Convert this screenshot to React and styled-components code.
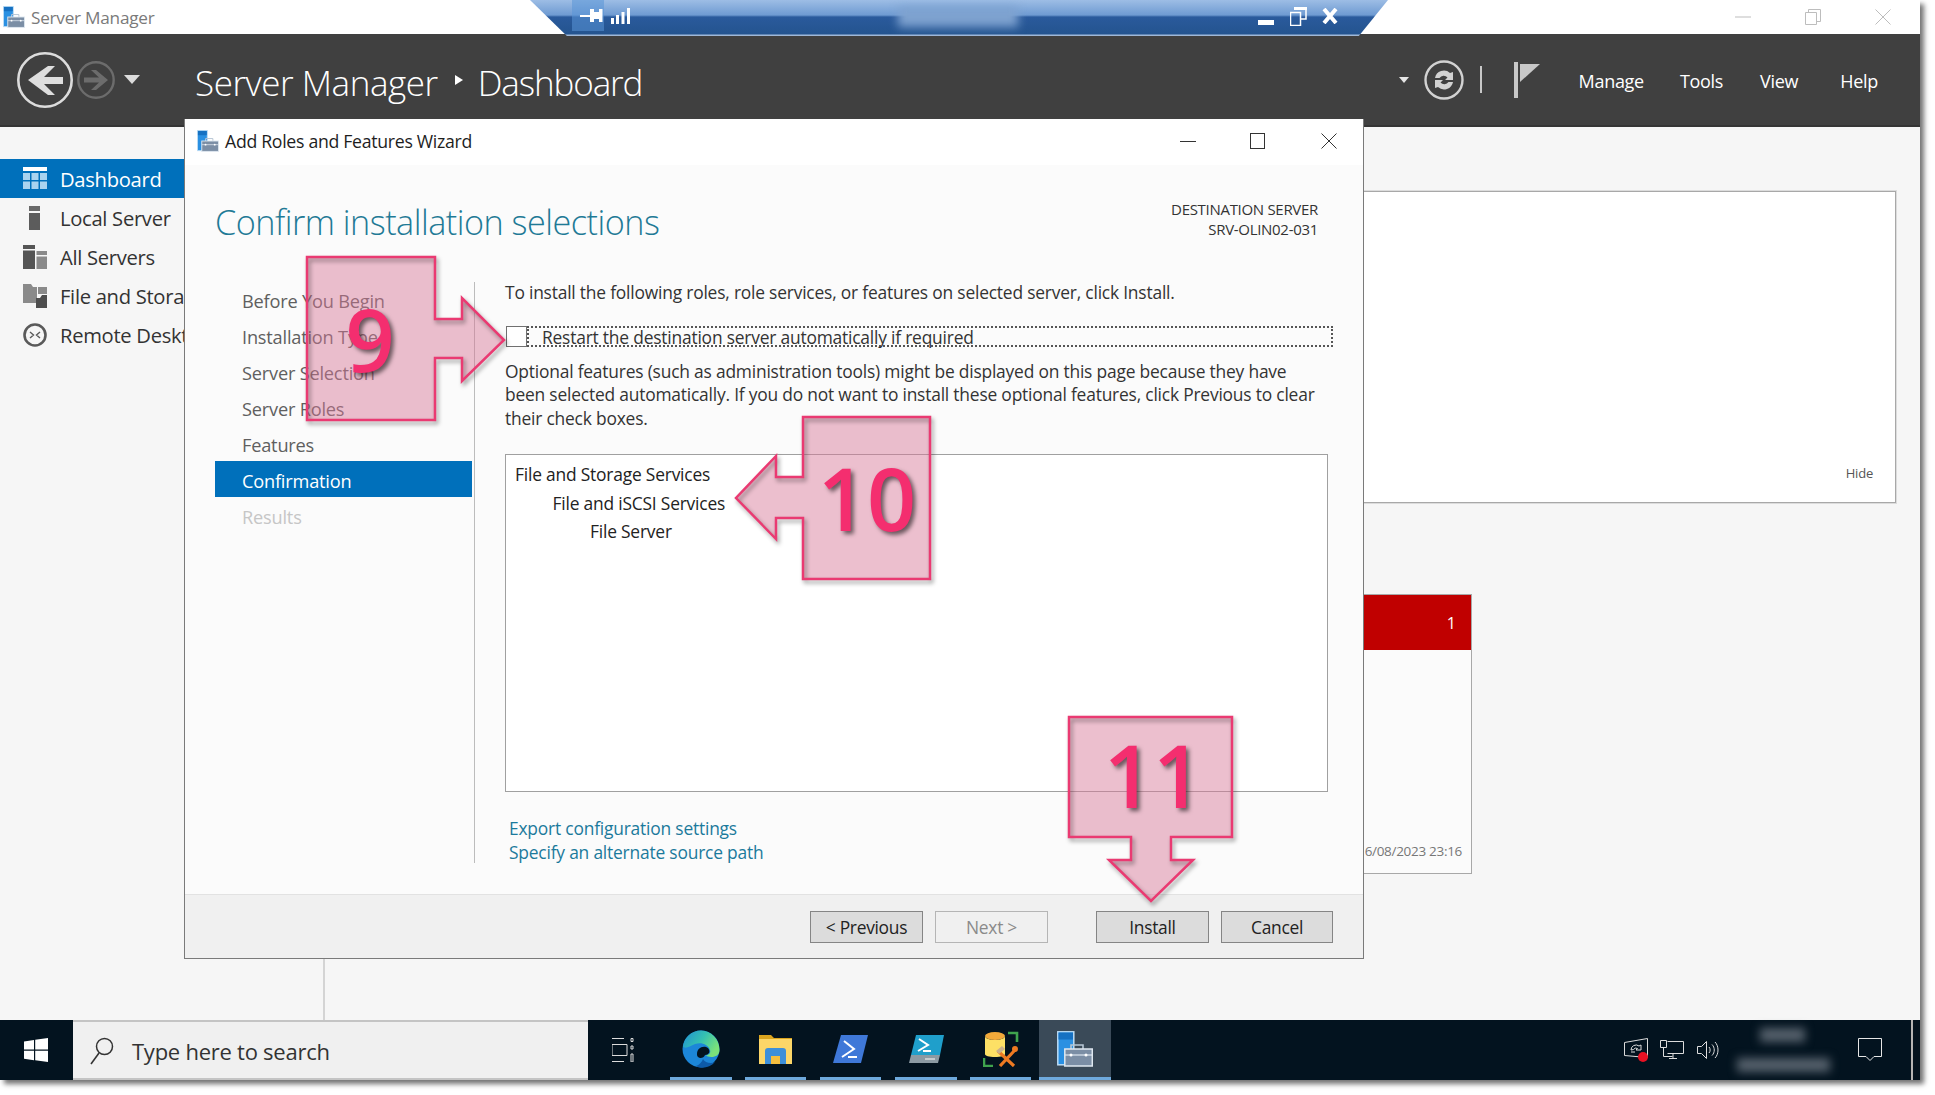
import React from 'react';
import styled, { createGlobalStyle } from 'styled-components';

const FONT = '"Open Sans", "Noto Sans", sans-serif';

const Global = createGlobalStyle`
  html, body { margin: 0; padding: 0; background: #fff; }
  body { font-family: ${FONT}; }
  * { box-sizing: border-box; }
  svg { flex: none; }
`;

const Shell = styled.div`
  width: 1935px;
  height: 1095px;
  position: relative;
  overflow: hidden;
  background: #fff;
`;

const Screen = styled.div`
  width: 1920px;
  height: 1080px;
  display: flex;
  flex-direction: column;
  background: #f6f6f6;
  box-shadow: 4px 4px 5px rgba(0, 0, 0, .55);
`;

/* window chrome */
const TitleBar = styled.div`
  height: 34px;
  flex: none;
  background: #fff;
  display: flex;
  align-items: center;
  padding: 0 29px 0 3px;
  gap: 6px;
`;
const AppName = styled.span`
  font-size: 17.2px;
  letter-spacing: -.25px;
  color: #7a7a7a;
  flex: 1;
`;
const Chrome = styled.div`
  display: flex;
  align-items: center;
  gap: 54px;
`;

const Header = styled.div`
  height: 93px;
  flex: none;
  background: #404040;
  border-bottom: 2px solid #353535;
  display: flex;
  align-items: center;
  padding: 0 42px 0 17px;
`;
const NavButtons = styled.div`
  display: flex;
  align-items: center;
  gap: 4px;
  margin-right: 55px;
`;
const NavCaret = styled.svg`
  margin-left: 5px;
`;
const Crumb = styled.span`
  font-size: 35px;
  font-weight: 300;
  letter-spacing: ${p => p.$tight ? '-1.1px' : '-.45px'};
  color: #fff;
  line-height: 1;
  margin-top: 5px;
`;
const CrumbSep = styled.svg`
  width: 8px;
  height: 10px;
  margin: 0 15px 0 17px;
  fill: #fff;
`;
const HeaderRight = styled.div`
  margin-left: auto;
  display: flex;
  align-items: center;
`;
const HeadCaret = styled.svg`
  margin-right: 15px;
`;
const MenuItem = styled.span`
  font-size: 18px;
  letter-spacing: -.3px;
  color: #fff;
  margin: 2px 0 0 ${p => p.$gap}px;
`;
const HeadDivider = styled.div`
  width: 2px;
  height: 27px;
  background: #c8c8c8;
  margin: 0 32px 0 16px;
`;

const Body = styled.div`
  flex: 1;
  display: flex;
  min-height: 0;
`;
const Sidebar = styled.nav`
  width: 185px;
  flex: none;
  padding-top: 32px;
  overflow: hidden;
`;
const SideRow = styled.div`
  height: 39px;
  display: flex;
  align-items: center;
  gap: 13px;
  padding-left: 23px;
  white-space: nowrap;
  font-size: 20.2px;
  letter-spacing: -.3px;
  color: ${p => (p.$active ? '#fff' : '#333')};
  background: ${p => (p.$active ? '#0070bb' : 'transparent')};
`;

/* what lies behind the dialog */
const Main = styled.div`
  flex: 1;
  display: flex;
  flex-direction: column;
  padding: 64px 24px 0 0;
`;
const ThumbPanel = styled.div`
  height: 312px;
  flex: none;
  background: #fff;
  border: 1px solid #a8a8a8;
  box-shadow: 0 0 0 1px #dcdcdc;
  display: flex;
  align-items: flex-end;
  justify-content: flex-end;
  padding: 0 22px 20px 0;
  font-size: 13px;
  letter-spacing: -.2px;
  color: #555;
`;
const Tile = styled.div`
  width: 1172px;
  height: 280px;
  flex: none;
  margin: 91px 0 0 115px;
  background: #fbfbfb;
  border: 1px solid #a8a8a8;
  display: flex;
  flex-direction: column;
`;
const TileHead = styled.div`
  height: 55px;
  flex: none;
  background: #c00000;
  color: #fff;
  display: flex;
  align-items: center;
  justify-content: flex-end;
  padding-right: 15px;
  font-size: 16px;
`;
const TileFoot = styled.div`
  margin-top: auto;
  padding: 0 9px 13px 0;
  text-align: right;
  color: #777;
  font-size: 13.5px;
  letter-spacing: -.3px;
`;
const Connector = styled.div`
  flex: 1;
  width: 2px;
  margin-left: 138px;
  background: #d4d4d4;
`;

/* dialog */
const Dialog = styled.div`
  position: absolute;
  left: 184px;
  top: 119px;
  width: 1180px;
  height: 840px;
  background: #fbfbfb;
  border: 1px solid #7a7a7a;
  border-top: 0;
  display: flex;
  flex-direction: column;
`;
const DialogTitle = styled.div`
  height: 46px;
  flex: none;
  background: #fff;
  display: flex;
  align-items: center;
  padding: 0 26px 3px 12px;
  gap: 6px;
`;
const DialogName = styled.span`
  font-size: 17.7px;
  letter-spacing: -.3px;
  color: #1e1e1e;
  flex: 1;
`;
const DialogControls = styled.div`
  display: flex;
  align-items: center;
  gap: 56px;
`;
const MinGlyph = styled.svg`
  margin-right: -2px;
`;
const HeadingRow = styled.div`
  height: 74px;
  flex: none;
  display: flex;
  justify-content: space-between;
  align-items: center;
  padding: 34px 45px 0 30px;
`;
const Heading = styled.h1`
  margin: 0;
  padding-top: 6px;
  font-size: 34.2px;
  font-weight: 300;
  letter-spacing: -.5px;
  line-height: 40px;
  color: #1f7a96;
`;
const Destination = styled.div`
  text-align: right;
  font-size: 15px;
  line-height: 20px;
  letter-spacing: -.3px;
  color: #333;
`;
const Columns = styled.div`
  flex: 1;
  display: flex;
  margin-top: 42px;
  padding-left: 30px;
  min-height: 0;
`;
const StepList = styled.div`
  width: 257px;
  flex: none;
`;
const Step = styled.div`
  height: 36px;
  display: flex;
  align-items: center;
  padding: 3px 0 0 27px;
  font-size: 18.2px;
  letter-spacing: -.2px;
  color: ${p => (p.$active ? '#fff' : p.$off ? '#c6c6c6' : '#5f5f5f')};
  background: ${p => (p.$active ? '#0070bb' : 'transparent')};
`;
const Divider = styled.div`
  width: 1px;
  height: 581px;
  margin: 1px 30px 0 2px;
  background: #bcbcbc;
  flex: none;
`;
const Content = styled.div`
  flex: 1;
  padding-right: 30px;
  font-size: 17.4px;
  letter-spacing: -.2px;
  line-height: 23.5px;
  color: #333;
`;
const Para = styled.p`
  margin: ${p => p.$top}px 0 0;
`;
const CheckRow = styled.div`
  display: flex;
  height: 21px;
  margin: 21px 0 0 1px;
  align-items: stretch;
`;
const CheckBox = styled.span`
  width: 21px;
  flex: none;
  background: #fff;
  border: 1px solid #707070;
`;
const CheckLabel = styled.span`
  flex: 1;
  border: 2px dotted #555;
  padding-left: 13px;
  line-height: 18px;
`;
const ResultBox = styled.div`
  width: 823px;
  height: 338px;
  margin: 24px 0 0;
  padding: 5px 9px;
  background: #fff;
  border: 1px solid #a0a0a0;
`;
const ResultLine = styled.div`
  height: 28.5px;
  line-height: 28.5px;
  padding-left: ${p => p.$depth * 37.5}px;
  color: #222;
`;
const Links = styled.div`
  margin: 24px 0 0 4px;
  line-height: 24px;
  color: #1b7a9c;
`;
const Footer = styled.div`
  height: 64px;
  flex: none;
  background: #f0f0f0;
  border-top: 1px solid #e2e2e2;
  display: flex;
  align-items: center;
  justify-content: flex-end;
  padding: 1px 30px 0 0;
  gap: 12px;
`;
const Button = styled.div`
  width: ${p => p.$w || 113}px;
  height: 32px;
  display: flex;
  align-items: center;
  justify-content: center;
  font-size: 17.4px;
  letter-spacing: -.3px;
  margin-left: ${p => p.$gap || 0}px;
  color: ${p => (p.$off ? '#8a8a8a' : '#222')};
  background: ${p => (p.$off ? '#f0f0f0' : '#dcdcdc')};
  border: 1px solid ${p => (p.$off ? '#b5b5b5' : '#858585')};
`;

/* pink annotations */
const Callout = styled.div`
  position: absolute;
  left: ${p => p.$x}px;
  top: ${p => p.$y}px;
  width: ${p => p.$w}px;
  height: ${p => p.$h}px;
`;
const CalloutShape = styled.svg`
  width: 100%;
  height: 100%;
  display: block;
  overflow: visible;
`;
const CalloutFill = styled.polygon`
  fill: rgba(214, 120, 150, .47);
`;
const CalloutEdge = styled.polygon`
  fill: none;
  stroke: #ea3a72;
  stroke-width: 2.5;
  filter: drop-shadow(2px 3px 2px rgba(0, 0, 0, .4));
`;
const CalloutNumber = styled.span`
  position: absolute;
  left: ${p => p.$cx}px;
  top: ${p => p.$cy}px;
  transform: translate(-50%, -50%);
  font-size: 86px;
  font-weight: 600;
  line-height: 1;
  color: #f42e6f;
  text-shadow: 3px 3px 4px rgba(0, 0, 0, .55);
`;

/* remote desktop bar */
const RdpBar = styled.div`
  position: absolute;
  left: 530px;
  top: 0;
  width: 858px;
  height: 36px;
  clip-path: polygon(0 0, 100% 0, 96.6% 100%, 4.3% 100%);
  background: linear-gradient(#9dbde5 0, #6f9bd2 15px, #2a5a9c 17px, #24548f 34px, #9fb8d8 35px);
`;
const RdpPin = styled.div`
  position: absolute;
  left: 42px;
  top: 0;
  width: 32px;
  height: 31px;
  background: rgba(90, 150, 215, .55);
`;
const RdpIcon = styled.svg`
  position: absolute;
  left: ${p => p.$x}px;
  top: ${p => p.$y}px;
`;
const Smudge = styled.div`
  position: absolute;
  left: ${p => p.$x}px;
  top: ${p => p.$y}px;
  width: ${p => p.$w}px;
  height: ${p => p.$h}px;
  background: ${p => p.$c};
  filter: blur(5px);
`;

/* taskbar */
const Taskbar = styled.div`
  height: 60px;
  flex: none;
  background: #03131f;
  display: flex;
  align-items: stretch;
  position: relative;
`;
const StartSlot = styled.div`
  width: 73px;
  display: flex;
  align-items: center;
  padding-left: 24px;
  flex: none;
`;
const SearchBox = styled.div`
  width: 515px;
  flex: none;
  display: flex;
  align-items: center;
  gap: 18px;
  padding: 2px 0 0 17px;
  background: #f0f0f0;
  border-top: 2px solid #c4c4c4;
  border-bottom: 2px solid #c4c4c4;
  font-size: 22px;
  letter-spacing: -.25px;
  color: #333;
`;
const TaskView = styled.div`
  width: 82px;
  flex: none;
  display: flex;
  align-items: center;
  justify-content: center;
  padding-right: 10px;
`;
const TaskItem = styled.div`
  width: ${p => p.$w}px;
  margin-right: ${p => p.$mr}px;
  flex: none;
  display: flex;
  align-items: center;
  justify-content: center;
  border-bottom: 3px solid #6ea9dc;
  background: ${p => (p.$active ? '#3a4a58' : 'transparent')};
`;
const Tray = styled.div`
  margin-left: auto;
  display: flex;
  align-items: center;
  width: 296px;
  padding-left: 7px;
  border-right: 2px solid #b5b5b5;
  margin-right: 7px;
  position: relative;
`;
const TrayIcon = styled.svg`
  margin: 0 ${p => p.$mr || 0}px 0 ${p => p.$ml || 0}px;
`;

const ServerIcon = ({ size = 24 }) => (
  <svg width={size} height={size} viewBox="0 0 36 36">
    <rect x=".8" y=".8" width="16" height="33" fill="#2a90e2" stroke="#bcdcf5" strokeWidth="1.5" />
    <rect x="1.500" y="1.500" width="14.500" height="7" fill="#1671c2" />
    <path d="M14 18v-4h12v4" fill="none" stroke="#b7c6d4" strokeWidth="1.600" />
    <rect x="7.800" y="18" width="27.500" height="17" fill="#7b8ea5" stroke="#dfe8f0" strokeWidth="1.500" />
    <path d="M8 24h27" stroke="#dfe8f0" strokeWidth="1.200" />
    <circle cx="14" cy="24" r="1.500" fill="#fff" />
    <circle cx="29" cy="24" r="1.500" fill="#fff" />
  </svg>
);

const CloseGlyph = ({ color, size = 16 }) => (
  <svg width={size} height={size} viewBox="0 0 16 16">
    <path d="M.5.5l15 15M15.500.5l-15 15" stroke={color} fill="none" />
  </svg>
);

const DashIcon = () => (
  <svg width="24" height="24" viewBox="0 0 24 24">
    <rect y="0" width="24" height="4" fill="#fff" />
    <path fill="#a9d3ef" d="M0 6h7v7H0zM8.500 6h7v7h-7zM17 6h7v7h-7zM0 14.500h7V22H0zM8.500 14.500h7V22h-7zM17 14.500h7V22h-7z" />
  </svg>
);
const LocalIcon = () => (
  <svg width="24" height="24" viewBox="0 0 24 24">
    <rect x="6" y="0" width="11" height="5" fill="#6a6a6a" />
    <rect x="6" y="7" width="11" height="17" fill="#5c5c5c" />
  </svg>
);
const AllIcon = () => (
  <svg width="24" height="24" viewBox="0 0 24 24">
    <rect y="0" width="12" height="4" fill="#555" />
    <rect y="5.500" width="12" height="18.500" fill="#555" />
    <rect x="13.500" y="6" width="10.500" height="4" fill="#8a8a8a" />
    <rect x="13.500" y="11.500" width="10.500" height="12.500" fill="#8a8a8a" />
  </svg>
);
const StorageIcon = () => (
  <svg width="24" height="24" viewBox="0 0 24 24">
    <path fill="#8a8a8a" d="M0 0h8l2 3h4v16H0z" />
    <path fill="#8a8a8a" d="M15 3h9v7h-9z" />
    <path fill="#4e4e4e" d="M13 14h4l2-3h5v13H13z" />
  </svg>
);
const RemoteIcon = () => (
  <svg width="24" height="24" viewBox="0 0 24 24">
    <circle cx="12" cy="12" r="10.500" fill="none" stroke="#5a5a5a" strokeWidth="2.600" />
    <path d="M7 9l3.500 3L7 15M17 9l-3.500 3 3.500 3" fill="none" stroke="#5a5a5a" strokeWidth="1.400" />
  </svg>
);

const App = () => (
  <Shell>
    <Global />
    <Screen>
      <TitleBar>
        <ServerIcon size={22} />
        <AppName>Server Manager</AppName>
        <Chrome>
          <svg width="16" height="16" viewBox="0 0 16 16"><path d="M0 8h16" stroke="#bdbdbd" /></svg>
          <svg width="16" height="16" viewBox="0 0 16 16"><path d="M.5 3.500h11v12H.5zM3.500 3.500v-3h12v12h-4" fill="none" stroke="#bdbdbd" /></svg>
          <CloseGlyph color="#bdbdbd" />
        </Chrome>
      </TitleBar>
      <Header>
        <NavButtons>
          <svg width="56" height="56" viewBox="0 0 56 56">
            <circle cx="28" cy="28" r="26.700" fill="none" stroke="#dcdcdc" strokeWidth="2.600" />
            <path d="M11 28l20-14h7L27 25h19v7H27l11 11h-7z" fill="#dedede" />
          </svg>
          <svg width="38" height="38" viewBox="0 0 38 38">
            <circle cx="19" cy="19" r="17.700" fill="none" stroke="#6c6c6c" strokeWidth="2.400" />
            <path d="M31 19L19 9h-5l8 7.500H7v5h15L14 29h5z" fill="#6c6c6c" />
          </svg>
          <NavCaret width="16" height="9" viewBox="0 0 16 9">
            <path d="M0 0h16L8 9z" fill="#dcdcdc" />
          </NavCaret>
        </NavButtons>
        <Crumb>Server Manager</Crumb>
        <CrumbSep viewBox="0 0 8 10"><path d="M0 0l8 5-8 5z" /></CrumbSep>
        <Crumb $tight>Dashboard</Crumb>
        <HeaderRight>
          <HeadCaret width="10" height="6" viewBox="0 0 10 6">
            <path d="M0 0h10L5 6z" fill="#e6e6e6" />
          </HeadCaret>
          <svg width="40" height="40" viewBox="0 0 40 40">
            <circle cx="20" cy="20" r="18.500" fill="none" stroke="#d2d2d2" strokeWidth="2.400" />
            <path d="M11 18a9 9 0 0 1 15-5l3-1v8h-8l2.500-2.500a5 5 0 0 0-8 .5zM29 22a9 9 0 0 1-15 5l-3 1v-8h8l-2.500 2.500a5 5 0 0 0 8-.5z" fill="#d2d2d2" />
          </svg>
          <HeadDivider />
          <svg width="26" height="36" viewBox="0 0 26 36">
            <rect x="0" y="0" width="4" height="36" fill="#c8c8c8" />
            <path d="M6 2h20L6 20z" fill="#c8c8c8" />
          </svg>
          <MenuItem $gap={39}>Manage</MenuItem>
          <MenuItem $gap={36}>Tools</MenuItem>
          <MenuItem $gap={37}>View</MenuItem>
          <MenuItem $gap={42}>Help</MenuItem>
        </HeaderRight>
      </Header>
      <Body>
        <Sidebar>
          <SideRow $active><DashIcon />Dashboard</SideRow>
          <SideRow><LocalIcon />Local Server</SideRow>
          <SideRow><AllIcon />All Servers</SideRow>
          <SideRow><StorageIcon />File and Storage Services</SideRow>
          <SideRow><RemoteIcon />Remote Desktop Services</SideRow>
        </Sidebar>
        <Main>
          <ThumbPanel>Hide</ThumbPanel>
          <Tile>
            <TileHead>1</TileHead>
            <TileFoot>6/08/2023 23:16</TileFoot>
          </Tile>
          <Connector />
        </Main>
      </Body>
      <Taskbar>
        <StartSlot>
          <svg width="24" height="24" viewBox="0 0 24 24">
            <path fill="#fff" d="M0 3.500l10-1.500v9.500H0zM11.200 1.800L24 0v11.500H11.200zM0 12.700h10v9.500L0 20.700zM11.200 12.700H24V24l-12.800-1.800z" />
          </svg>
        </StartSlot>
        <SearchBox>
          <svg width="24" height="28" viewBox="0 0 24 28">
            <circle cx="14.500" cy="9.500" r="8" fill="none" stroke="#333" strokeWidth="1.500" />
            <path d="M9 16L1 27" stroke="#333" strokeWidth="1.600" />
          </svg>
          Type here to search
        </SearchBox>
        <TaskView>
          <svg width="24" height="24" viewBox="0 0 24 24">
            <path d="M0 .5h12M0 23.500h12M0 6.500h15v11H0zM19 .5h2v3h-2zM19 8h2v3h-2zM19 16h2v8h-2z" fill="none" stroke="#dcdcdc" />
          </svg>
        </TaskView>
        <TaskItem $w={62} $mr={13}>
          <svg width="38" height="38" viewBox="0 0 38 38">
            <defs>
              <linearGradient id="edgeTop" x1="0" y1="0" x2="1" y2=".5">
                <stop offset="0" stopColor="#1f8fd4" />
                <stop offset=".55" stopColor="#35c1b1" />
                <stop offset="1" stopColor="#7be27a" />
              </linearGradient>
            </defs>
            <circle cx="19" cy="19" r="18.500" fill="#1c86d8" />
            <path d="M14 36c5 3 14 2 19-4-4 2-10 1-12-3-1 3-4 6-7 7z" fill="#0d5aa8" />
            <path d="M1 17C2 7 10 .5 19 .5 29 .5 37.500 9 37.500 20c0 5-4 7-8 7-3 0-5-1-5.500-2 3 0 5-2 4-5-2-6-9-8-15-6-5 2-9 5-11.500 3z" fill="url(#edgeTop)" />
            <path d="M15 24c0-5 4-8 9-7 3 1 4 4 3 6-1 1-2 2-4 2-1 3-5 4-7 2-1-1-1-2-1-3z" fill="#03131f" />
          </svg>
        </TaskItem>
        <TaskItem $w={61} $mr={14}>
          <svg width="33" height="30" viewBox="0 0 33 30">
            <path d="M0 1h12l3 3h18v5H0z" fill="#dba51f" />
            <rect y="5" width="33" height="25" fill="#fcd668" />
            <path d="M6 30V17a3 3 0 0 1 3-3h15a3 3 0 0 1 3 3v13h-6v-8H12v8z" fill="#3d8fd9" />
            <rect x="12" y="22" width="9" height="8" fill="#f5bf3f" />
          </svg>
        </TaskItem>
        <TaskItem $w={61} $mr={14}>
          <svg width="35" height="28" viewBox="0 0 35 28">
            <path d="M8 0h27l-7 28H0z" fill="#3f78d8" />
            <path d="M11 6l10 8-12 8M15 22h9" fill="none" stroke="#fff" strokeWidth="2" />
          </svg>
        </TaskItem>
        <TaskItem $w={62} $mr={13}>
          <svg width="35" height="28" viewBox="0 0 35 28">
            <path d="M7 0h28l-4 20H2z" fill="#1f9fcb" />
            <path d="M2 20h29l-2 8H0z" fill="#8c9aa3" />
            <path d="M10 4l9 6-10 6M14 16h8" fill="none" stroke="#fff" strokeWidth="2" />
            <path d="M16 24h10" stroke="#e6e6e6" strokeWidth="1.300" />
          </svg>
        </TaskItem>
        <TaskItem $w={61} $mr={8}>
          <svg width="36" height="36" viewBox="0 0 36 36">
            <ellipse cx="12" cy="5" rx="10" ry="4" fill="#f2a93a" />
            <path d="M2 5v18c0 2 4 3 10 3s10-1 10-3V5c0 2-4 4-10 4S2 7 2 5z" fill="#fde065" />
            <path d="M25 2h9v9M1 27v8h9" fill="none" stroke="#3fa34d" strokeWidth="2.600" />
            <path d="M15 20l16 15M32 19L17 35" stroke="#ee7a22" strokeWidth="3.200" />
            <path d="M13 20l6-5 3 3-6 5z" fill="#c9b08a" />
            <circle cx="32" cy="18" r="3" fill="#ee7a22" />
          </svg>
        </TaskItem>
        <TaskItem $w={72} $mr={0} $active>
          <ServerIcon size={36} />
        </TaskItem>
        <Tray>
          <TrayIcon $mr={12} width="24" height="24" viewBox="0 0 24 24">
            <path d="M.5 4.500L23.500.5v19l-23-2zM7 12a5 5 0 0 1 8-4l2-1v5h-5l1.500-1.500a3 3 0 0 0-4 1zM7 14h4" fill="none" stroke="#dcdcdc" />
            <circle cx="19" cy="19" r="5" fill="#e81123" />
          </TrayIcon>
          <TrayIcon $mr={13} width="24" height="20" viewBox="0 0 24 20">
            <path d="M7.500 1.500h16v12h-16M.5 .5h6v7h-6zM3.500 7.500v9h9M9 18.500h8M13 13.500v5" fill="none" stroke="#dcdcdc" />
          </TrayIcon>
          <TrayIcon width="22" height="20" viewBox="0 0 22 20">
            <path d="M.5 6.500h4l5-5v17l-5-5h-4zM12 7c1.500 1.500 1.500 4.500 0 6M15 4.500c3 3 3 8 0 11M18 2c4 4 4 12 0 16" fill="none" stroke="#dcdcdc" />
          </TrayIcon>
          <Smudge $x={143} $y={8} $w={45} $h={14} $c="#56616c" />
          <Smudge $x={120} $y={38} $w={93} $h={14} $c="#56616c" />
          <TrayIcon $ml={139} width="24" height="24" viewBox="0 0 24 24">
            <path d="M.5 .5h23v18H16l-4 4-4-4H.5z" fill="none" stroke="#e6e6e6" />
          </TrayIcon>
        </Tray>
      </Taskbar>
    </Screen>

    <Dialog>
      <DialogTitle>
        <ServerIcon size={22} />
        <DialogName>Add Roles and Features Wizard</DialogName>
        <DialogControls>
          <MinGlyph width="16" height="16" viewBox="0 0 16 16"><path d="M0 8.500h16" stroke="#333" /></MinGlyph>
          <svg width="15" height="16" viewBox="0 0 15 16"><rect x=".5" y=".5" width="14" height="15" fill="none" stroke="#333" /></svg>
          <CloseGlyph color="#333" />
        </DialogControls>
      </DialogTitle>
      <HeadingRow>
        <Heading>Confirm installation selections</Heading>
        <Destination>
          DESTINATION SERVER<br />SRV-OLIN02-031
        </Destination>
      </HeadingRow>
      <Columns>
        <StepList>
          <Step>Before You Begin</Step>
          <Step>Installation Type</Step>
          <Step>Server Selection</Step>
          <Step>Server Roles</Step>
          <Step>Features</Step>
          <Step $active>Confirmation</Step>
          <Step $off>Results</Step>
        </StepList>
        <Divider />
        <Content>
          <Para $top={0}>To install the following roles, role services, or features on selected server, click Install.</Para>
          <CheckRow>
            <CheckBox />
            <CheckLabel>Restart the destination server automatically if required</CheckLabel>
          </CheckRow>
          <Para $top={13}>
            Optional features (such as administration tools) might be displayed on this page because they have<br />
            been selected automatically. If you do not want to install these optional features, click Previous to clear<br />
            their check boxes.
          </Para>
          <ResultBox>
            <ResultLine $depth={0}>File and Storage Services</ResultLine>
            <ResultLine $depth={1}>File and iSCSI Services</ResultLine>
            <ResultLine $depth={2}>File Server</ResultLine>
          </ResultBox>
          <Links>
            Export configuration settings<br />
            Specify an alternate source path
          </Links>
        </Content>
      </Columns>
      <Footer>
        <Button>&lt; Previous</Button>
        <Button $off>Next &gt;</Button>
        <Button $gap={36}>Install</Button>
        <Button $w={112}>Cancel</Button>
      </Footer>
    </Dialog>

    <RdpBar>
      <RdpPin />
      <RdpIcon $x={50} $y={9} width="23" height="13" viewBox="0 0 23 13" fill="#fff">
        <path d="M0 6h10v2H0zM10 0h4v13h-4zM14 3h5v7h-5zM19 0h3.500v13H19z" />
      </RdpIcon>
      <RdpIcon $x={81} $y={8} width="19" height="16" viewBox="0 0 19 16" fill="#fff">
        <path d="M0 10h3v6H0zM5 7h3v9H5zM10.500 4h3v12h-3zM16 0h3v16h-3z" />
      </RdpIcon>
      <Smudge $x={368} $y={7} $w={120} $h={20} $c="#7fa3d0" />
      <RdpIcon $x={728} $y={20} width="16" height="6" viewBox="0 0 16 6"><rect width="16" height="5" fill="#fff" /></RdpIcon>
      <RdpIcon $x={760} $y={7} width="17" height="19" viewBox="0 0 17 19">
        <path d="M.5 5.500h10v13H.5zM4 1h12v11h-5" fill="none" stroke="#fff" strokeWidth="1.500" />
        <rect x="4" y="0" width="13" height="3" fill="#fff" />
      </RdpIcon>
      <RdpIcon $x={792} $y={8} width="16" height="16" viewBox="0 0 16 16">
        <path d="M2 1l12 14M14 1L2 15" stroke="#fff" strokeWidth="4" />
      </RdpIcon>
    </RdpBar>

    <Callout $x={307} $y={257} $w={197} $h={163}>
      <CalloutShape viewBox="0 0 197 163">
        <CalloutFill points="0,0 128,0 128,62 155,62 155,41 197,83 155,124 155,101 128,101 128,163 0,163" />
        <CalloutEdge points="0,0 128,0 128,62 155,62 155,41 197,83 155,124 155,101 128,101 128,163 0,163" />
      </CalloutShape>
      <CalloutNumber $cx={63} $cy={82}>9</CalloutNumber>
    </Callout>
    <Callout $x={736} $y={417} $w={194} $h={162}>
      <CalloutShape viewBox="0 0 194 162">
        <CalloutFill points="194,0 67,0 67,60 40,60 40,39 0,81 40,122 40,101 67,101 67,162 194,162" />
        <CalloutEdge points="194,0 67,0 67,60 40,60 40,39 0,81 40,122 40,101 67,101 67,162 194,162" />
      </CalloutShape>
      <CalloutNumber $cx={131} $cy={81}>10</CalloutNumber>
    </Callout>
    <Callout $x={1069} $y={717} $w={163} $h={184}>
      <CalloutShape viewBox="0 0 163 184">
        <CalloutFill points="0,0 163,0 163,120 102,120 102,143 124,143 82,184 40,143 62,143 62,120 0,120" />
        <CalloutEdge points="0,0 163,0 163,120 102,120 102,143 124,143 82,184 40,143 62,143 62,120 0,120" />
      </CalloutShape>
      <CalloutNumber $cx={84} $cy={58}>11</CalloutNumber>
    </Callout>
  </Shell>
);

export default App;
